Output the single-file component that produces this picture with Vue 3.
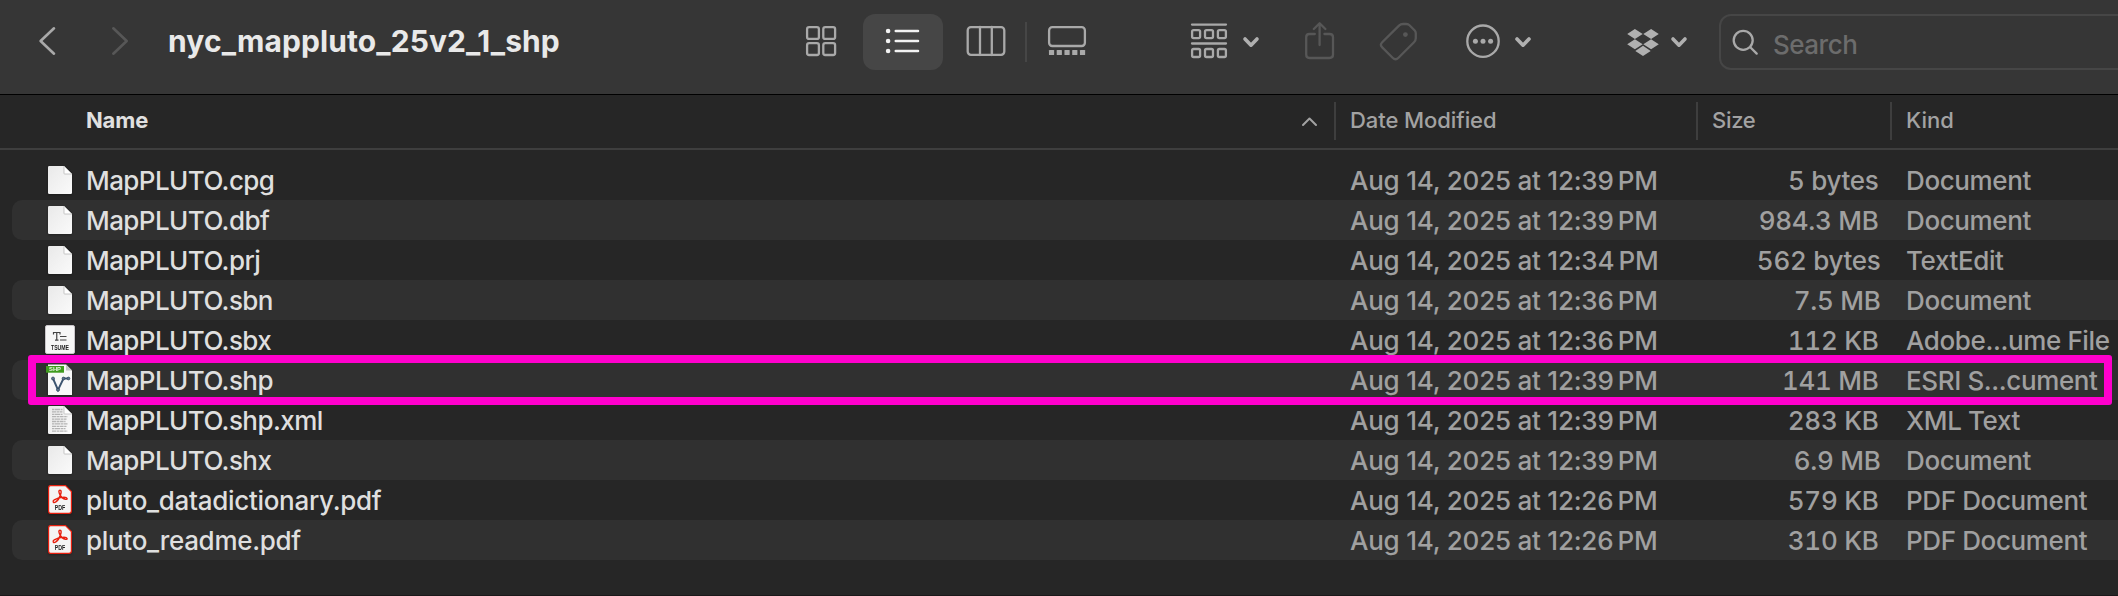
<script setup>
const dates = (t) => `Aug 14, 2025 at ${t}\u2009PM`
const files = [
  { name: 'MapPLUTO.cpg', time: '12:39', size: '5 bytes', kind: 'Document', icon: 'doc' },
  { name: 'MapPLUTO.dbf', time: '12:39', size: '984.3 MB', kind: 'Document', icon: 'doc' },
  { name: 'MapPLUTO.prj', time: '12:34', size: '562 bytes', kind: 'TextEdit', icon: 'doc', wide: true },
  { name: 'MapPLUTO.sbn', time: '12:36', size: '7.5 MB', kind: 'Document', icon: 'doc', wide: true },
  { name: 'MapPLUTO.sbx', time: '12:36', size: '112 KB', kind: 'Adobe...ume File', icon: 'tsume' },
  { name: 'MapPLUTO.shp', time: '12:39', size: '141 MB', kind: 'ESRI S...cument', icon: 'shp', marked: true },
  { name: 'MapPLUTO.shp.xml', time: '12:39', size: '283 KB', kind: 'XML Text', icon: 'xml' },
  { name: 'MapPLUTO.shx', time: '12:39', size: '6.9 MB', kind: 'Document', icon: 'doc', wide: true },
  { name: 'pluto_datadictionary.pdf', time: '12:26', size: '579 KB', kind: 'PDF Document', icon: 'pdf' },
  { name: 'pluto_readme.pdf', time: '12:26', size: '310 KB', kind: 'PDF Document', icon: 'pdf' },
]
const textLines = [10, 12.4, 14.8, 17.2, 19.6, 22, 24.4, 26.8, 29.2, 31.6]
</script>

<template>
  <div class="finder">
    <header class="toolbar">
      <svg class="nav back" width="20" height="32" viewBox="37 25 20 32"><path d="M54 28.3 40.6 41 54 53.7" /></svg>
      <svg class="nav forward" width="20" height="32" viewBox="110 25 20 32"><path d="M113.3 28.3 126.7 41 113.3 53.7" /></svg>
      <h1 class="title">nyc_mappluto_25v2_1_shp</h1>

      <div class="views">
        <svg class="ic grid" width="32" height="32" viewBox="805 25 32 32">
          <rect x="807.1" y="27.1" width="11.8" height="11.8" rx="2" />
          <rect x="823.3" y="27.1" width="11.8" height="11.8" rx="2" />
          <rect x="807.1" y="43.2" width="11.8" height="11.8" rx="2" />
          <rect x="823.3" y="43.2" width="11.8" height="11.8" rx="2" />
        </svg>
        <div class="selected">
          <svg class="list" width="36" height="26" viewBox="885 28 36 26">
            <g class="dots"><circle cx="888.1" cy="31" r="2.3" /><circle cx="888.1" cy="41" r="2.3" /><circle cx="888.1" cy="51" r="2.3" /></g>
            <path d="M895.8 31H918M895.8 41H918M895.8 51H918" />
          </svg>
        </div>
        <svg class="ic columns" width="40" height="32" viewBox="965.5 25 40 32">
          <rect x="967.2" y="27.2" width="36.6" height="27.6" rx="3.2" />
          <path d="M979.5 27V55M991.3 27V55" />
        </svg>
        <i class="divider"></i>
        <svg class="ic gallery" width="40" height="32" viewBox="1047 25 40 32">
          <rect x="1049.1" y="27.2" width="35.8" height="18.8" rx="3.2" />
          <g class="solid">
            <rect v-for="n in 5" :key="n" :x="1041.2 + n * 7.75" y="50" width="5.2" height="5" rx="0.6" />
          </g>
        </svg>
      </div>

      <svg class="ic group" width="38" height="38" viewBox="1190 22 38 38">
        <path d="M1192 24.6H1226M1192 43.5H1226" />
        <g v-for="n in 3" :key="n">
          <rect :x="1179.2 + n * 12.9" y="30.1" width="8" height="8" rx="1.5" />
          <rect :x="1179.2 + n * 12.9" y="49" width="8" height="8" rx="1.5" />
        </g>
      </svg>
      <svg class="chev c1" width="20" height="14" viewBox="0 0 20 14"><path d="M4 4 10 10.2 16 4" /></svg>
      <svg class="ic dim share" width="32" height="40" viewBox="1304 21 32 40">
        <path d="M1314.8 34H1309.5Q1306.2 34 1306.2 37.3V54.5Q1306.2 58 1309.5 58H1329.5Q1333 58 1333 54.5V37.3Q1333 34 1329.5 34H1324.4M1319.6 45V23.5M1313.8 29 1319.6 23.2 1325.4 29" />
      </svg>
      <svg class="ic dim tag" width="40" height="40" viewBox="1379 22 40 40">
        <path d="M1399 25.6Q1400.7 24 1403 24H1406.5Q1408.2 24 1409.5 25.3L1414.5 30.3Q1415.8 31.6 1415.8 33.3V38Q1415.8 40.5 1414 42.3L1398.5 57.8Q1395.5 60.7 1392.6 57.8L1382.2 47.4Q1379.6 44.8 1382.2 42.2Z" />
        <circle class="fill" cx="1405.4" cy="34.6" r="2.4" />
      </svg>
      <svg class="ic more" width="36" height="36" viewBox="1464.7 23 36 36">
        <circle cx="1482.7" cy="41.2" r="15.7" />
        <g class="fill"><circle cx="1475.1" cy="41.3" r="2.5" /><circle cx="1482.7" cy="41.3" r="2.5" /><circle cx="1490.3" cy="41.3" r="2.5" /></g>
      </svg>
      <svg class="chev c2" width="20" height="14" viewBox="0 0 20 14"><path d="M4 4 10 10.2 16 4" /></svg>
      <svg class="dropbox" width="34" height="30" viewBox="1626 27 34 30">
        <path d="M1634.9 29 1642.7 34 1634.9 39 1627.2 34ZM1651.1 29 1658.8 34 1651.1 39 1643.3 34ZM1634.9 39.2 1642.7 44.2 1634.9 49.2 1627.2 44.2ZM1651.1 39.2 1658.8 44.2 1651.1 49.2 1643.3 44.2ZM1643 45.8 1650.7 50.9 1643 56 1635.3 50.9Z" />
      </svg>
      <svg class="chev c3" width="20" height="14" viewBox="0 0 20 14"><path d="M4 4 10 10.2 16 4" /></svg>
      <div class="search">
        <svg class="ic" width="28" height="28" viewBox="1732 28 28 28">
          <circle cx="1743.2" cy="40.3" r="9.5" /><path d="M1750.3 47.3 1756.7 53.6" />
        </svg>
        <span>Search</span>
      </div>
    </header>

    <div class="cols head">
      <div class="name">Name
        <svg class="sort" width="19" height="13" viewBox="0 0 19 13"><path d="M3 10 9.5 3.5 16 10" /></svg>
      </div>
      <div class="cell date">Date Modified</div>
      <div class="cell size">Size</div>
      <div class="cell kind">Kind</div>
    </div>

    <main class="rows">
      <div v-for="f in files" :key="f.name" class="cols row">
        <div class="name" :class="f.icon">
          <svg class="file" width="32" height="40" viewBox="0 0 32 40">
            <defs>
              <linearGradient id="paper" x1="0" y1="0" x2="1" y2="1"><stop offset="0" stop-color="#e9e9e9" /><stop offset="1" stop-color="#fafafa" /></linearGradient>
            </defs>
            <template v-if="f.icon === 'doc' || f.icon === 'xml'">
              <path d="M5.2 6H20L28 14V32.8Q28 34 26.8 34H5.2Q4 34 4 32.8V7.2Q4 6 5.2 6Z" fill="url(#paper)" />
              <template v-if="f.icon === 'xml'">
                <path v-for="(y, i) in textLines" :key="y" :d="`M8 ${y - .5}H${i < 3 ? 18.5 : 23.5 - (i % 3)}`" stroke="#b4b4b4" stroke-width="1.3" :stroke-dasharray="i % 2 ? '4 .6 2.5 .5' : '2.5 .5 5 .6'" />
              </template>
              <path d="M20 6 28 14H20.7Q20 14 20 13.3Z" fill="#fff" stroke="#b0b0b0" stroke-width=".7" />
            </template>
            <template v-else-if="f.icon === 'tsume'">
              <rect x="1.5" y="5.5" width="29" height="28" rx="1.5" fill="#f6f6f6" stroke="#c9c5c9" />
              <path d="M9.5 14.5V12.5H16V14.5M12.75 12.5V20M11 20.2H14.5M16 16.5H22.5M16 20H22.5" fill="none" stroke="#444" stroke-width="1.2" />
              <text x="16" y="30" class="tiny" text-anchor="middle" textLength="18" lengthAdjust="spacingAndGlyphs">TSUME</text>
            </template>
            <template v-else-if="f.icon === 'shp'">
              <path d="M4 4.5H22L28 10.5V35H4Z" fill="#f8f8f8" />
              <path d="M22 4.5V10.5H28Z" fill="#c4c4c4" />
              <rect x="2" y="6" width="18" height="6.7" fill="#3f9b1e" />
              <text x="11" y="11.4" class="tiny shptag" text-anchor="middle" textLength="12" lengthAdjust="spacingAndGlyphs">SHP</text>
              <path d="M9 18.5 14 30 19.5 18.5H24.5" fill="none" stroke="#3d5570" stroke-width="1.9" />
              <g fill="#5d7690" stroke="#2c4056" stroke-width=".7"><circle cx="9" cy="18.5" r="1.5" /><circle cx="14" cy="29.8" r="1.5" /><circle cx="19.5" cy="18.5" r="1.4" /><circle cx="24.5" cy="18.5" r="1.4" /></g>
            </template>
            <template v-else>
              <path d="M6.5 5.6H21.5L27.4 11.5V31Q27.4 33.4 25 33.4H6.5Q4.6 33.4 4.6 31V8Q4.6 5.6 6.5 5.6Z" fill="#f5f5f5" stroke="#e8200f" stroke-width="1.2" />
              <path d="M16.3 15.3C14.6 12.5 14.4 10.2 16 10.2C17.6 10.2 17.4 12.5 16.3 15.3C15.5 18 13.5 21 11.5 22.2C9.5 23.2 8 21.5 10.3 19.8C13 18 17 17.2 20 17.2C23.8 17.2 24 19.6 21.5 19.4C19.5 19 17.3 17.5 16.3 15.3Z" fill="none" stroke="#e8200f" stroke-width="1.4" />
              <text x="16" y="30.2" class="tiny" text-anchor="middle" textLength="10.5" lengthAdjust="spacingAndGlyphs">PDF</text>
            </template>
          </svg>
          <span>{{ f.name }}</span>
        </div>
        <div class="cell date">{{ dates(f.time) }}</div>
        <div class="cell size" :class="{ wide: f.wide }">{{ f.size }}</div>
        <div class="cell kind">{{ f.kind }}</div>
        <i v-if="f.marked" class="marker"></i>
      </div>
    </main>
  </div>
</template>

<style>
html, body { margin: 0; background: #262626; overflow: hidden; }
</style>

<style scoped>
* { box-sizing: border-box; }
.finder { width: 2118px; height: 596px; overflow: hidden; background: #262626; border-bottom: 1px solid #1b181a; font-family: Inter, "Liberation Sans", sans-serif; color: #dfdfdf; }
svg { display: block; flex: none; }
.toolbar { height: 95px; display: flex; align-items: flex-start; background: #363636; border-bottom: 1px solid #000; }
.nav { fill: none; stroke: #a9a9a9; stroke-width: 2.6; stroke-linecap: round; stroke-linejoin: round; }
.back { margin: 25px 0 0 37px; }
.forward { margin: 25px 0 0 53px; stroke: #575757; }
.title { flex: none; width: 636px; margin: 21px 0 0 38px; font-size: 30px; line-height: 40px; font-weight: 700; letter-spacing: .1px; color: #e9e9e9; white-space: nowrap; }
.views { flex: none; display: flex; align-items: flex-start; }
.ic { fill: none; stroke: #a9a9a9; stroke-width: 2.3; stroke-linecap: round; stroke-linejoin: round; }
.solid, .fill { fill: #a9a9a9; stroke: none; }
.grid { margin: 25px 0 0 1px; }
.selected { width: 80px; height: 56px; margin: 14px 0 0 26px; padding: 14px 0 0 22px; border-radius: 12px; background: #464646; }
.list { fill: none; stroke: #f3f3f3; stroke-width: 2.6; stroke-linecap: round; }
.dots { fill: #f3f3f3; stroke: none; }
.columns { margin: 25px 0 0 22.5px; }
.divider { width: 2px; height: 40px; margin: 22px 0 0 19.5px; background: #464646; }
.gallery { margin: 25px 0 0 20px; }
.group { margin: 22px 0 0 103px; }
.chev { fill: none; stroke: #b0b0b0; stroke-width: 3.6; stroke-linecap: round; stroke-linejoin: round; margin-top: 35px; }
.c1 { margin-left: 13px; }
.share { margin: 21px 0 0 43px; }
.tag { margin: 22px 0 0 43px; }
.dim { stroke: #575757; }
.dim .fill { fill: #575757; }
.more { margin: 23px 0 0 45.7px; }
.c2 { margin-left: 12.3px; }
.dropbox { margin: 27px 0 0 93px; fill: #b0b0b0; }
.c3 { margin-left: 9px; }
.search { flex: none; display: flex; width: 420px; height: 56px; margin: 14px 0 0 30px; padding: 12px 0 0 11px; border: 2px solid #464646; border-radius: 12px; }
.search span { margin: 1px 0 0 13px; font-size: 26px; line-height: 32px; letter-spacing: -.5px; font-weight: 450; color: #6c6c6c; }

.cols { position: relative; display: grid; grid-template-columns: 1322px 362px 194px 1fr; }
.head { height: 55px; padding: 7px 0 0 12px; border-bottom: 2px solid #3e3e3e; font-size: 22px; line-height: 36px; font-weight: 500; color: #a2a2a2; }
.head .name { display: flex; justify-content: space-between; padding: 0 15px 0 74px; font-weight: 700; color: #e0e0e0; letter-spacing: -.15px; }
.head .cell { height: 38px; border-left: 2px solid #3e3e3e; padding-left: 14px; }
.head .date { letter-spacing: -.07px; }
.head .size { letter-spacing: -.3px; }
.sort { margin-top: 13px; fill: none; stroke: #a2a2a2; stroke-width: 2; stroke-linecap: round; stroke-linejoin: round; }
.rows { padding: 10px 0 0 12px; }
.row { height: 40px; border-radius: 10px 0 0 10px; font-size: 26px; font-weight: 450; line-height: 41px; color: #a0a0a0; white-space: pre; }
.row:nth-child(even) { background: #303030; }
.row .name { display: flex; padding-left: 32px; color: #dfdfdf; letter-spacing: -.57px; }
.row .name.pdf { letter-spacing: -.3px; }
.row .name span { margin-left: 10px; }
.file { filter: drop-shadow(0 1px 1px rgba(0, 0, 0, .3)); }
.row .date { padding-left: 16px; letter-spacing: -.23px; }
.row .size { padding-right: 11.5px; text-align: right; font-variant-numeric: tabular-nums; letter-spacing: -.3px; }
.row .size.wide { padding-right: 9.5px; }
.row .kind { padding-left: 16px; letter-spacing: -.38px; }
.tiny { font-family: "Liberation Sans", sans-serif; font-weight: 700; font-size: 7px; fill: #222; letter-spacing: 0; }
.tiny.shptag { font-size: 5.5px; fill: #e5f5df; }
.marker { position: absolute; left: 16px; top: -5px; width: 2084px; height: 50px; border: 8px solid #ff00cc; border-radius: 3px; z-index: 1; }
</style>
